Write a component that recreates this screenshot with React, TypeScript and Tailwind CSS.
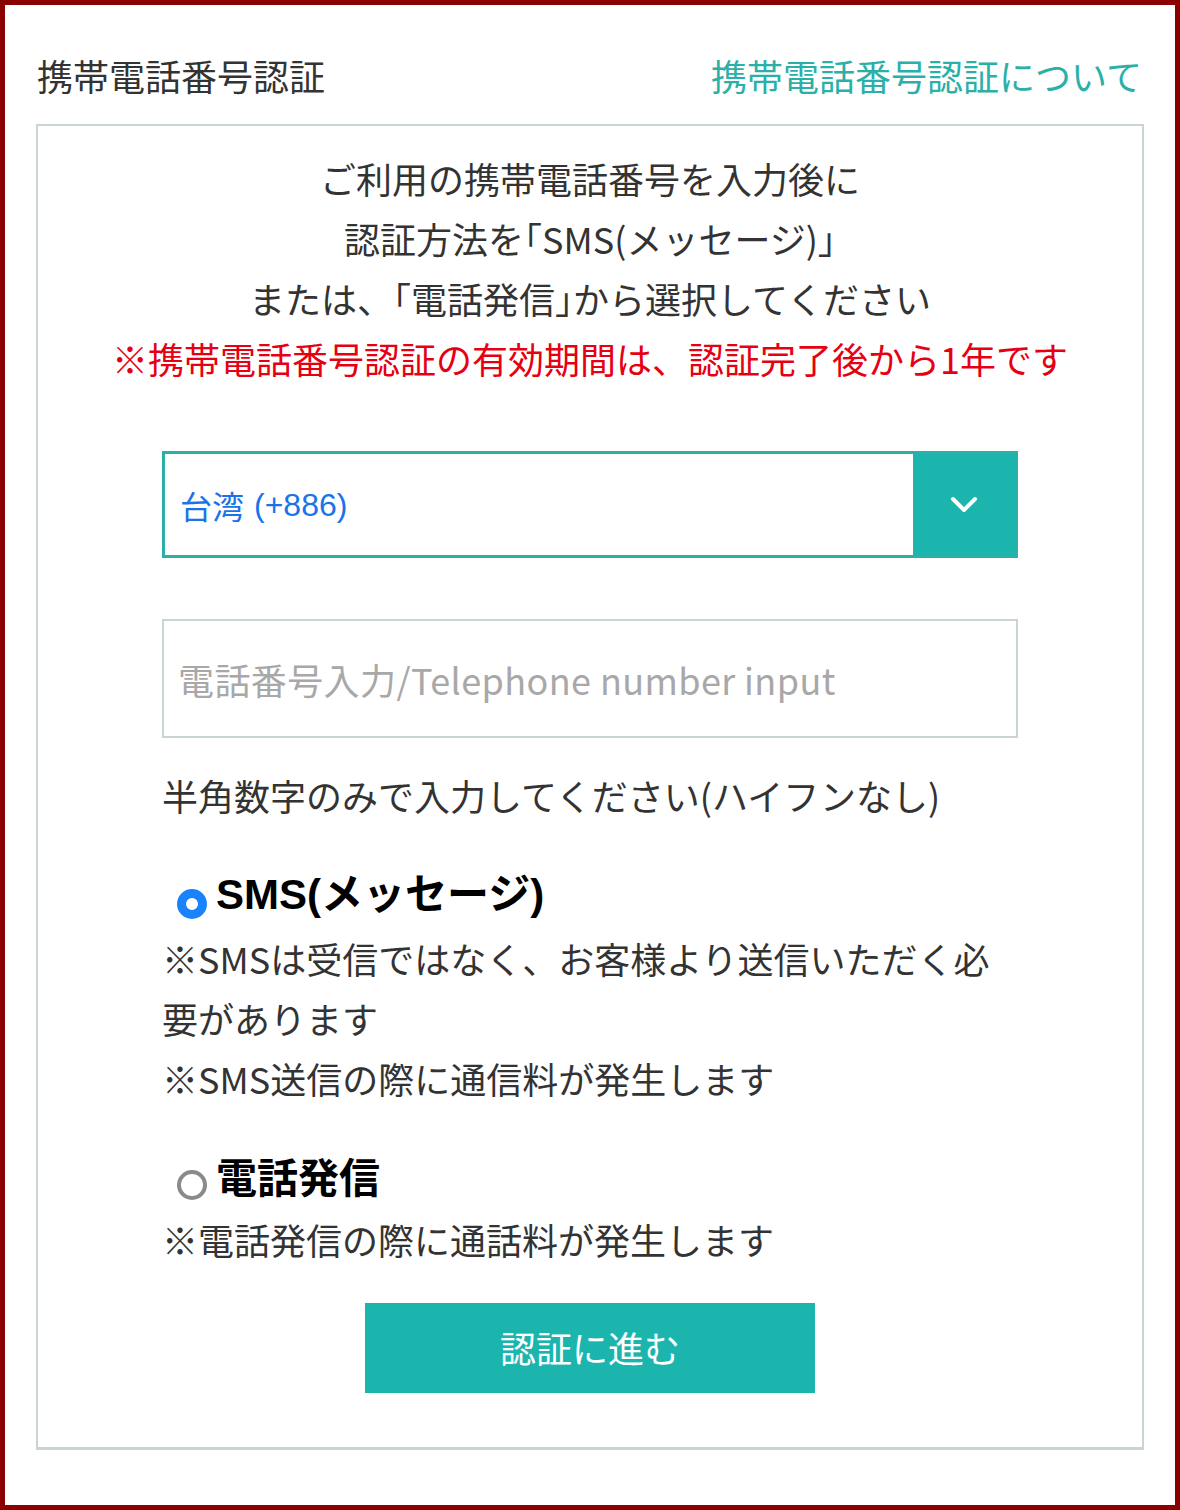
import { useState } from "react";

const JP = "font-['Noto_Sans_CJK_JP','Noto_Sans',sans-serif]";

type Method = "sms" | "call";

function Radio({ checked, className }: { checked: boolean; className: string }) {
  return checked ? (
    <span className={`${className} block h-[30px] w-[30px] shrink-0 rounded-full border-[9px] border-[#1a82fb] bg-white`} />
  ) : (
    <span className={`${className} block h-[30px] w-[30px] shrink-0 rounded-full border-4 border-[#8a8a8a] bg-white`} />
  );
}

export default function App() {
  const [method, setMethod] = useState<Method>("sms");
  const [phone, setPhone] = useState("");

  return (
    <div className={`${JP} h-[1510px] border-[5px] border-[#8b0000] bg-white px-[31px] pt-[40px] text-[#333]`}>
      {/* Title row */}
      <div className="flex items-center justify-between text-[36px] leading-[60px]">
        <h1 className="ml-px font-normal">携帯電話番号認証</h1>
        <a href="#" className="mr-[2px] text-[#2bb0a8]">
          携帯電話番号認証について
        </a>
      </div>

      {/* Card */}
      <div className="mt-[19px] border-2 border-b-[3px] border-[#cbd4d4] px-[124px] pb-[54px] pt-[22px]">
        <p className="-mx-[100px] text-center text-[36px] leading-[60px]">
          ご利用の携帯電話番号を入力後に
          <br />
          認証方法を｢SMS(メッセージ)｣
          <br />
          または、「電話発信｣から選択してください
          <br />
          <span className="text-[#e60012]">※携帯電話番号認証の有効期間は、認証完了後から1年です</span>
        </p>

        {/* Country select */}
        <div className="mt-[63px] flex h-[107px] border-[3px] border-[#2bb0a8]">
          <div className="flex flex-1 items-center pl-[15px] font-['Liberation_Sans','Noto_Sans_CJK_JP',sans-serif] text-[32px] text-[#1a73e8]">
            <span className={JP}>台湾</span>
            <span className="ml-[10px]">(+886)</span>
          </div>
          <div className="flex w-[102px] items-center justify-center bg-[#1bb5ae]">
            <svg width="28" height="18" viewBox="0 0 28 18" fill="none">
              <path d="M3 3l11 11L25 3" stroke="white" strokeWidth="4" strokeLinecap="round" strokeLinejoin="round" />
            </svg>
          </div>
        </div>

        {/* Phone input */}
        <input
          value={phone}
          onChange={(e) => setPhone(e.target.value)}
          placeholder="電話番号入力/Telephone number input"
          className="mt-[61px] block h-[119px] w-full border-2 border-[#cbd4d4] pl-[14px] text-[36px] tracking-[0.4px] text-[#333] outline-none placeholder:text-[#a8a8a8]"
        />

        <p className="mt-[27px] text-[36px] leading-[60px]">半角数字のみで入力してください(ハイフンなし)</p>

        {/* SMS option */}
        <button
          type="button"
          onClick={() => setMethod("sms")}
          className="mt-[36px] ml-[15px] flex items-start gap-[9px] text-left"
        >
          <Radio checked={method === "sms"} className="mt-[28px]" />
          <span className="font-['Liberation_Sans','Noto_Sans_CJK_JP',sans-serif] text-[42px] font-bold leading-[60px] text-black">
            SMS(<span className={JP}>メッセージ</span>)
          </span>
        </button>
        <p className="mt-[3px] text-[36px] leading-[60px]">
          ※SMSは受信ではなく、お客様より送信いただく必
          <br />
          要があります
          <br />
          ※SMS送信の際に通信料が発生します
        </p>

        {/* Call option */}
        <button
          type="button"
          onClick={() => setMethod("call")}
          className="mt-[37px] ml-[15px] flex items-start gap-[9px] text-left"
        >
          <Radio checked={method === "call"} className="mt-[25px]" />
          <span className="text-[41px] font-bold leading-[60px] text-black">電話発信</span>
        </button>
        <p className="mt-[4px] text-[36px] leading-[60px]">※電話発信の際に通話料が発生します</p>

        <div className="mt-[34px] flex justify-center">
          <button type="button" className="h-[90px] w-[450px] bg-[#1bb5ae] pb-[3px] text-[36px] text-white">
            認証に進む
          </button>
        </div>
      </div>
    </div>
  );
}
